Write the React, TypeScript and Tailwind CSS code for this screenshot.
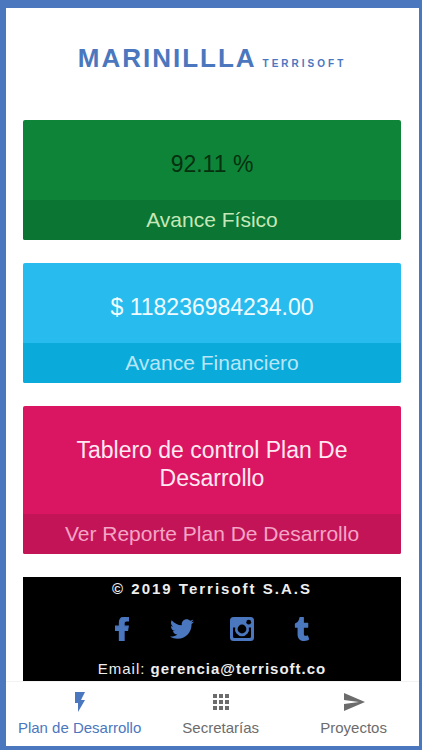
import type { ReactNode } from "react";
import { FaFacebookF, FaTwitter, FaTumblr } from "react-icons/fa";
import { MdFlashOn, MdApps, MdSend } from "react-icons/md";

function InstagramIcon() {
  return (
    <svg viewBox="0 0 24 24" className="size-6" aria-hidden="true">
      <rect width="24" height="24" rx="3.500" fill="currentColor" />
      <path d="M3 10.500h2.200a7 7 0 1 0 13.600 0H21v9a1.500 1.500 0 0 1-1.500 1.500h-15A1.500 1.500 0 0 1 3 19.500z" fill="#000" />
      <circle cx="12" cy="12" r="4.400" fill="#000" />
      <circle cx="18.700" cy="5.200" r="2.400" fill="#000" />
    </svg>
  );
}

type PanelProps = {
  title: string;
  caption: string;
  panelClass: string;
  titleClass: string;
  captionClass: string;
};

function Panel({ title, caption, panelClass, titleClass, captionClass }: PanelProps) {
  return (
    <section className={`overflow-hidden rounded-xs text-center ${panelClass}`}>
      <h2 className={`px-8 pt-[30px] pb-[22px] text-[23px] leading-7 ${titleClass}`}>{title}</h2>
      <p className={`text-[21px] leading-10 ${captionClass}`}>{caption}</p>
    </section>
  );
}

const socials: { name: string; icon: ReactNode }[] = [
  { name: "Facebook", icon: <FaFacebookF className="size-6 stroke-current stroke-[24px]" /> },
  { name: "Twitter", icon: <FaTwitter className="size-6" /> },
  { name: "Instagram", icon: <InstagramIcon /> },
  { name: "Tumblr", icon: <FaTumblr className="size-6" /> },
];

const tabs: { label: string; icon: ReactNode; color: string }[] = [
  { label: "Plan de Desarrollo", icon: <MdFlashOn className="size-6" />, color: "text-[#4b77be]" },
  { label: "Secretarías", icon: <MdApps className="size-6" />, color: "text-[#6c6c6c]" },
  { label: "Proyectos", icon: <MdSend className="size-6" />, color: "text-[#6c6c6c]" },
];

export default function App() {
  return (
    <div className="flex min-h-screen flex-col border-t-8 border-r-3 border-b-4 border-l-6 border-[#4b77be] bg-white font-['Liberation_Sans',Arial,sans-serif]">
      <main className="flex flex-1 flex-col gap-[23px] pr-[18px] pl-[17px]">
        <header className="flex items-baseline justify-center gap-1.5 pt-[34px] pb-[23px] text-[#4b77be]">
          <h1 className="text-[26px] leading-8 font-bold tracking-[2px]">MARINILLLA</h1>
          <span className="text-[10px] leading-3 font-bold tracking-[3px]">TERRISOFT</span>
        </header>
        <Panel
          title="92.11 %"
          caption="Avance Físico"
          panelClass="bg-[#0e8438]"
          titleClass="text-[#06310f]"
          captionClass="bg-[#0b7533] text-[#c5e8b8]"
        />
        <Panel
          title="$ 118236984234.00"
          caption="Avance Financiero"
          panelClass="bg-[#28bcee]"
          titleClass="text-[#f0fbff]"
          captionClass="bg-[#0aabdb] text-[#b8e6f6]"
        />
        <Panel
          title="Tablero de control Plan De Desarrollo"
          caption="Ver Reporte Plan De Desarrollo"
          panelClass="bg-[#da1561]"
          titleClass="text-[#ffe9f2]"
          captionClass="bg-[#c41458] text-[#f3a5c6]"
        />
        <footer className="bg-black text-center text-[15px] leading-6 text-[#eeeeee]">
          <p className="font-bold tracking-[2px]">© 2019 Terrisoft S.A.S</p>
          <div className="flex justify-center gap-9 py-4 text-[#4b77be]">
            {socials.map((s) => (
              <a key={s.name} href="#" aria-label={s.name}>
                {s.icon}
              </a>
            ))}
          </div>
          <p className="tracking-[1px]">
            Email: <a href="mailto:gerencia@terrisoft.co" className="font-bold">gerencia@terrisoft.co</a>
          </p>
        </footer>
      </main>
      <nav className="grid grid-cols-[36fr_33fr_32fr] border-t border-[#f3f3f3] pt-2 pb-1">
        {tabs.map((t) => (
          <button key={t.label} type="button" className={`flex flex-col items-center text-[15px] leading-7 ${t.color}`}>
            {t.icon}
            <span>{t.label}</span>
          </button>
        ))}
      </nav>
    </div>
  );
}
